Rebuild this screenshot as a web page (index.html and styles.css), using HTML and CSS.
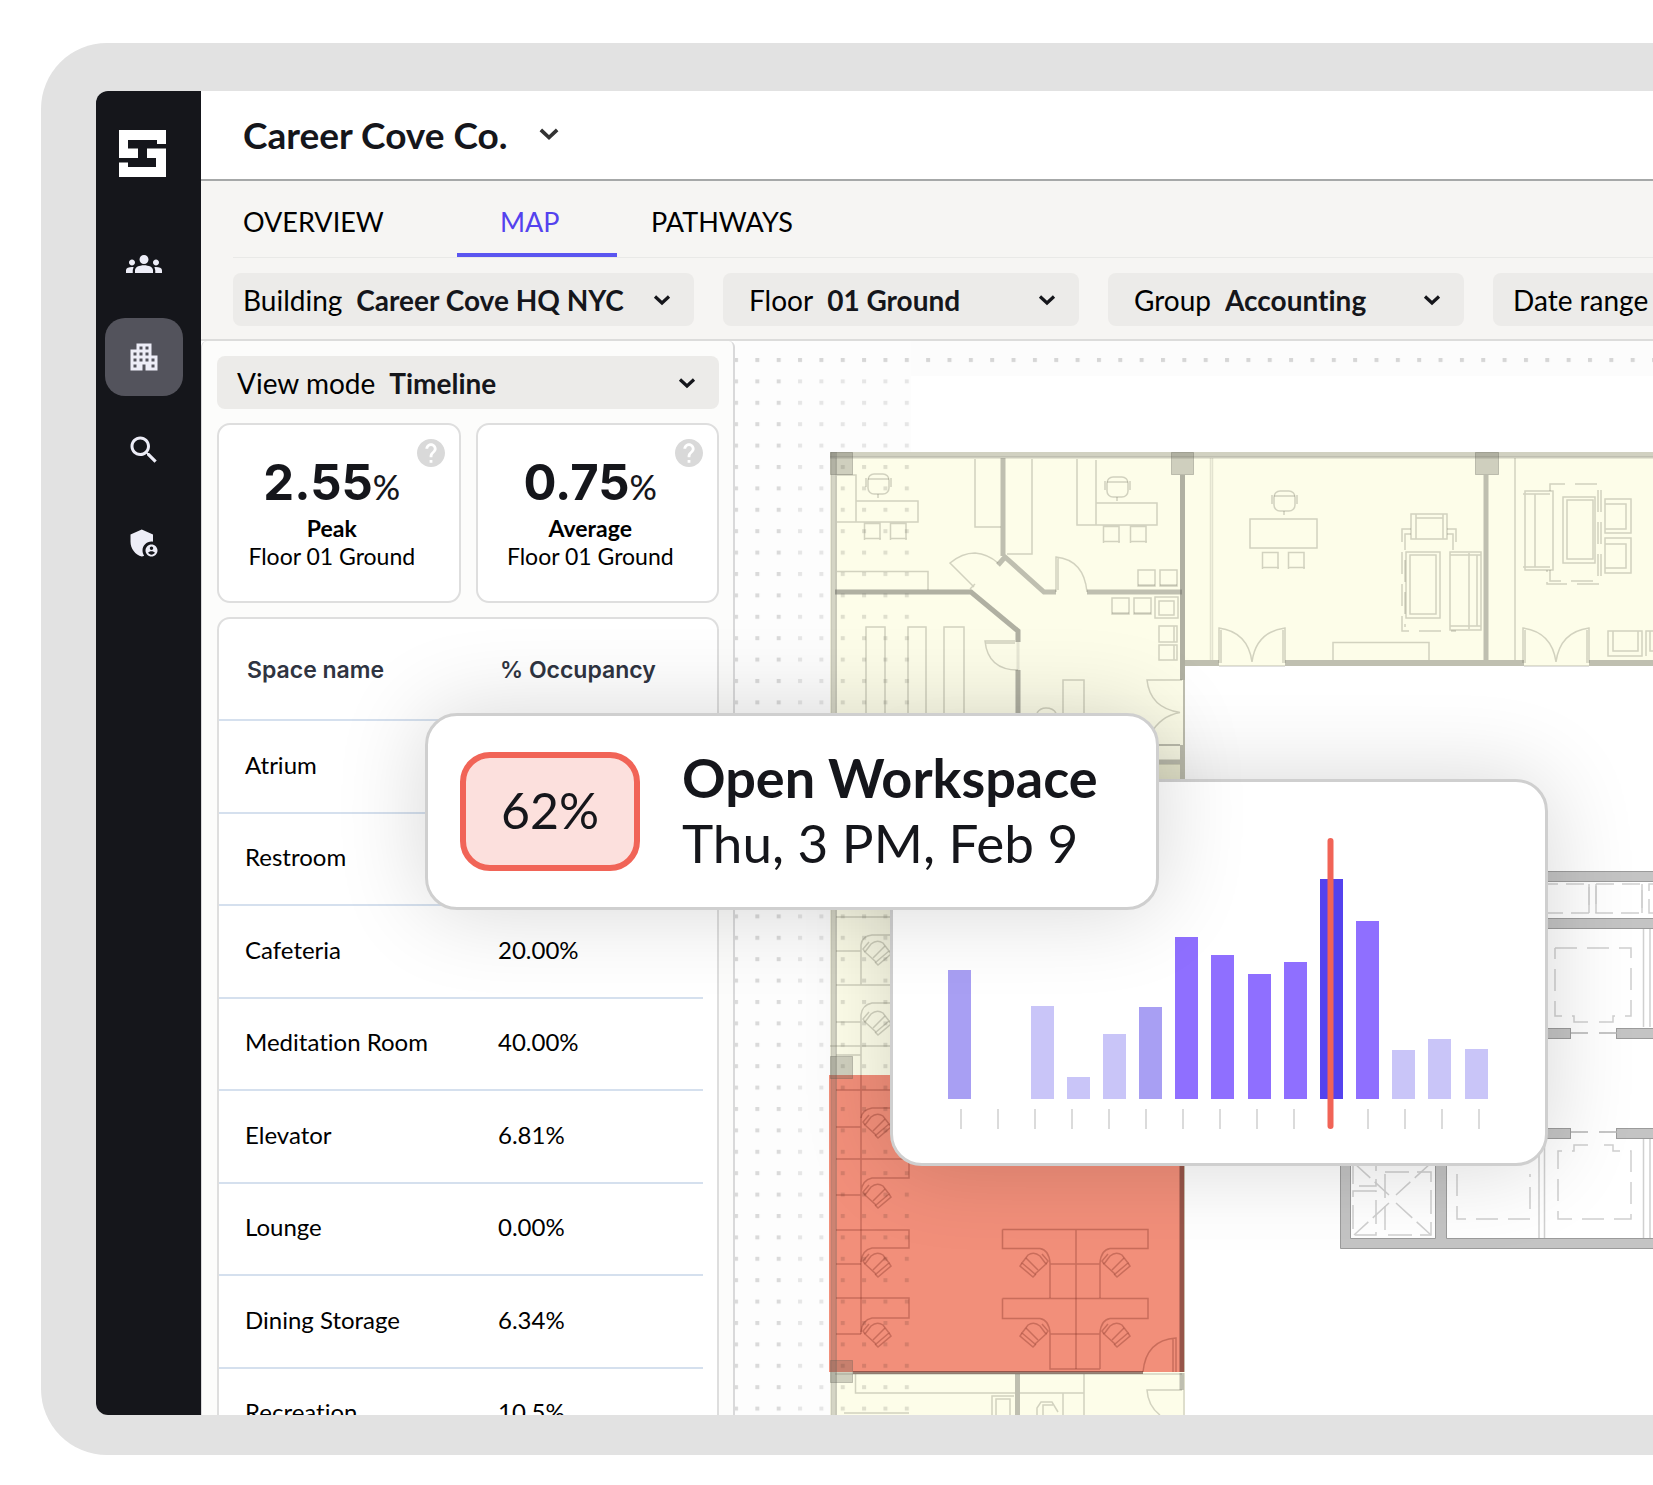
FILE: index.html
```html
<!DOCTYPE html>
<html lang="en">
<head>
    <meta charset="UTF-8">
    <meta name="viewport" content="width=device-width, initial-scale=1.0">
    <title>Career Cove Co. - Map</title>
    <link rel="stylesheet" href="styles.css">
</head>
<body>
<svg class="defs" width="0" height="0" aria-hidden="true">
    <symbol id="chevron" viewBox="0 0 18 12"><path d="M2 2.5L9 9L16 2.5" fill="none" stroke="currentColor" stroke-width="3.2"/></symbol>
    <symbol id="help" viewBox="0 0 24 24"><path d="M12 2C6.480 2 2 6.480 2 12s4.480 10 10 10 10-4.480 10-10S17.520 2 12 2zm1 17h-2v-2h2v2zm2.070-7.750l-.9.920C13.450 12.900 13 13.500 13 15h-2v-.5c0-1.100.450-2.100 1.170-2.830l1.240-1.260c.370-.360.590-.860.590-1.410 0-1.100-.9-2-2-2s-2 .9-2 2H8c0-2.210 1.790-4 4-4s4 1.790 4 4c0 .880-.360 1.680-.930 2.250z"/></symbol>
</svg>

<div class="device">
    <div class="screen">
        <nav class="sidebar" aria-label="Main">
            <a class="logo" href="#" aria-label="Home">
                <svg width="47" height="47" viewBox="0 0 47 47"><path fill="#fff" fill-rule="evenodd" d="M0 0H47V14H38V10H9V18.500H19V28H0ZM47 18.500V47H0V32.500H9V37H37V28H28V18.500Z"/></svg>
            </a>
            <a class="nav-item" href="#" aria-label="People">
                <svg viewBox="0 0 24 24"><path d="M12 12.750c1.630 0 3.070.390 4.240.9 1.080.480 1.760 1.560 1.760 2.730V18H6v-1.610c0-1.180.680-2.260 1.760-2.730 1.170-.520 2.610-.910 4.240-.910zM4 13c1.100 0 2-.9 2-2s-.9-2-2-2-2 .9-2 2 .9 2 2 2zm1.130 1.100c-.370-.060-.740-.1-1.130-.1-.990 0-1.930.210-2.780.580C.480 14.900 0 15.620 0 16.430V18h4.500v-1.610c0-.830.230-1.610.630-2.290zM20 13c1.100 0 2-.9 2-2s-.9-2-2-2-2 .9-2 2 .9 2 2 2zm4 3.430c0-.810-.480-1.530-1.220-1.850-.850-.370-1.790-.580-2.780-.580-.390 0-.760.040-1.130.1.400.680.630 1.460.630 2.290V18H24v-1.570zM12 6c1.660 0 3 1.340 3 3s-1.340 3-3 3-3-1.340-3-3 1.340-3 3-3z"/></svg>
            </a>
            <a class="nav-item active" href="#" aria-label="Buildings">
                <svg viewBox="0 0 24 24"><path d="M17 11V3H7v4H3v14h8v-4h2v4h8V11h-4zM7 19H5v-2h2v2zm0-4H5v-2h2v2zm0-4H5V9h2v2zm4 4H9v-2h2v2zm0-4H9V9h2v2zm0-4H9V5h2v2zm4 8h-2v-2h2v2zm0-4h-2V9h2v2zm0-4h-2V5h2v2zm4 12h-2v-2h2v2zm0-4h-2v-2h2v2z"/></svg>
            </a>
            <a class="nav-item" href="#" aria-label="Search">
                <svg viewBox="0 0 24 24"><path d="M15.500 14h-.790l-.280-.270C15.410 12.590 16 11.110 16 9.500 16 5.910 13.090 3 9.500 3S3 5.910 3 9.500 5.910 16 9.500 16c1.610 0 3.090-.590 4.230-1.570l.270.280v.790l5 4.990L20.490 19l-4.990-5zm-6 0C7.010 14 5 11.990 5 9.500S7.010 5 9.500 5 14 7.010 14 9.500 11.990 14 9.500 14z"/></svg>
            </a>
            <a class="nav-item" href="#" aria-label="Admin">
                <svg viewBox="0 0 24 24"><path d="M17 11c.340 0 .670.040 1 .090V6.270L10.500 3 3 6.270v4.910c0 4.540 3.200 8.790 7.500 9.820.550-.130 1.080-.320 1.600-.550-.690-.980-1.100-2.170-1.100-3.450 0-3.310 2.690-6 6-6z"/><path d="M17 13c-2.210 0-4 1.790-4 4s1.790 4 4 4 4-1.790 4-4-1.790-4-4-4zm0 1.380c.620 0 1.120.510 1.120 1.120s-.510 1.120-1.120 1.120-1.120-.510-1.120-1.120.5-1.120 1.120-1.120zm0 5.370c-.930 0-1.740-.460-2.240-1.170.050-.720 1.510-1.080 2.240-1.080s2.190.360 2.240 1.080c-.5.710-1.310 1.170-2.240 1.170z"/></svg>
            </a>
        </nav>

        <div class="main">
            <header class="topbar">
                <select class="company" aria-label="Company">
                    <option>Career Cove Co.</option>
                </select>
                <svg class="chevron large"><use href="#chevron"/></svg>
            </header>

            <div class="controls">
                <nav class="tabs" aria-label="Views">
                    <a class="tab" href="#">OVERVIEW</a>
                    <a class="tab active" href="#" aria-current="page">MAP</a>
                    <a class="tab" href="#">PATHWAYS</a>
                </nav>
                <div class="filters">
                    <div class="field compact">
                        <label for="building">Building</label>
                        <select id="building"><option>Career Cove HQ NYC</option></select>
                        <svg class="chevron"><use href="#chevron"/></svg>
                    </div>
                    <div class="field">
                        <label for="floor">Floor</label>
                        <select id="floor"><option>01 Ground</option></select>
                        <svg class="chevron"><use href="#chevron"/></svg>
                    </div>
                    <div class="field">
                        <label for="group">Group</label>
                        <select id="group"><option>Accounting</option></select>
                        <svg class="chevron"><use href="#chevron"/></svg>
                    </div>
                    <button class="field range" type="button">Date range</button>
                </div>
            </div>

            <div class="content">
                <aside class="panel">
                    <div class="field view-mode">
                        <label for="view-mode">View mode</label>
                        <select id="view-mode"><option>Timeline</option></select>
                        <svg class="chevron"><use href="#chevron"/></svg>
                    </div>

                    <div class="stats">
                        <div class="stat">
                            <button class="help" type="button" aria-label="About peak"><svg viewBox="2 2 20 20"><use href="#help" width="24" height="24"/></svg></button>
                            <div class="stat-value">2.55<span>%</span></div>
                            <div class="stat-name">Peak</div>
                            <div class="stat-place">Floor 01 Ground</div>
                        </div>
                        <div class="stat">
                            <button class="help" type="button" aria-label="About average"><svg viewBox="2 2 20 20"><use href="#help" width="24" height="24"/></svg></button>
                            <div class="stat-value">0.75<span>%</span></div>
                            <div class="stat-name">Average</div>
                            <div class="stat-place">Floor 01 Ground</div>
                        </div>
                    </div>

                    <div class="spaces">
                        <table>
                            <thead>
                                <tr><th>Space name</th><th>% Occupancy</th></tr>
                            </thead>
                            <tbody>
                                <tr><td>Atrium</td><td></td></tr>
                                <tr><td>Restroom</td><td></td></tr>
                                <tr><td>Cafeteria</td><td>20.00%</td></tr>
                                <tr><td>Meditation Room</td><td>40.00%</td></tr>
                                <tr><td>Elevator</td><td>6.81%</td></tr>
                                <tr><td>Lounge</td><td>0.00%</td></tr>
                                <tr><td>Dining Storage</td><td>6.34%</td></tr>
                                <tr><td>Recreation</td><td>10.5%</td></tr>
                            </tbody>
                        </table>
                    </div>
                </aside>

                <div class="map">
                    <svg class="plan" viewBox="735 341 918 1074" preserveAspectRatio="xMinYMin slice" role="img" aria-label="Floor plan">
                        <defs>
                            <pattern id="dots" x="734" y="358" width="21.350" height="21.400" patternUnits="userSpaceOnUse">
                                <rect width="4" height="4" fill="#000"/>
                            </pattern>
                            <g id="desk-chair">
                                <rect x="-10" y="-10" width="21" height="20" rx="6"/>
                                <path d="M-10 -5H11M-12 -6V3M13 -6V3M0 10V14"/>
                            </g>
                            <g id="stool"><path d="M.5 17V.5H16V17M0 15.500H17" /></g>
                            <g id="seat"><rect width="17" height="16"/><path d="M0 15H17"/></g>
                            <g id="task-chair">
                                <path d="M-12 1L-6 -7Q0 -12 6 -8L12 0L-1 11Z"/>
                                <path d="M-4 7L8 -5M12 0L14 3L1 14L-2 11M-12 1L-14 -2L-8 -9"/>
                            </g>
                            <g id="double-door"><path d="M0 35V0Q29 4 33 34Q37 4 66 0V35M2 35V2M64 35V2"/></g>
                        </defs>

                        <rect x="735" y="341" width="918" height="35" fill="#fcfcfc"/>
                        <rect x="735" y="341" width="176" height="1074" fill="#fdfdfd"/>

                        <!-- rooms -->
                        <path d="M830 452H1653V666H1185V1415H830Z" fill="#fdfde9"/>
                        <rect x="829" y="1075" width="355" height="297" fill="#f28f7a"/>

                        <!-- dot grid -->
                        <g fill="url(#dots)">
                            <rect x="734" y="358" width="919" height="10" opacity=".15"/>
                            <rect x="734" y="368" width="60" height="1047" opacity=".14"/>
                            <rect x="794" y="368" width="117" height="84" opacity=".09"/>
                            <rect x="794" y="452" width="36" height="963" opacity=".09"/>
                            <rect x="830" y="452" width="81" height="963" opacity=".12"/>
                        </g>

                        <!-- outer walls -->
                        <g fill="none" stroke="#60605a">
                            <path d="M830 454.500H1653" stroke-width="5" stroke-opacity=".28"/>
                            <path d="M830 457.500H1653" stroke-width="2" stroke-opacity=".3"/>
                            <path d="M834 452V1415" stroke-width="6" stroke-opacity=".25"/>
                            <path d="M831 452V1415M836 458V1415" stroke-opacity=".2"/>
                        </g>
                        <g fill="#5a5a50" fill-opacity=".28" stroke="#5a5a50" stroke-opacity=".3">
                            <rect x="830.500" y="452.500" width="22" height="22"/>
                            <rect x="1171.500" y="452.500" width="22" height="22"/>
                            <rect x="1475.500" y="452.500" width="23" height="22"/>
                            <rect x="830.500" y="1056.500" width="22" height="22"/>
                            <rect x="830.500" y="1360.500" width="22" height="22"/>
                        </g>

                        <!-- inner walls -->
                        <g fill="none" stroke="#6a6a62" stroke-opacity=".42" stroke-width="5">
                            <path d="M1003 458V556M998 565L1005 557L1044 592H1056M1087 592H1182"/>
                            <path d="M835 592H971L1018 631V642M1018 670V720" stroke-opacity=".52"/>
                            <path d="M1018 642V670" stroke-width="3" stroke-opacity=".15"/>
                            <path d="M1182.500 475V680" stroke-opacity=".52"/>
                            <path d="M1182.500 745V780M1157 762H1180"/>
                            <path d="M1157 745H1180M1184 680V745" stroke-width="2"/>
                            <path d="M1185 663H1219M1285 663H1524M1589 663H1653" stroke-width="6"/>
                            <path d="M1219 666H1285M1524 666H1589" stroke-width="1"/>
                            <path d="M1486 475V660"/>
                            <path d="M1182 1160V1372" stroke="#5a2e28" stroke-opacity=".6"/>
                            <path d="M853 1372.500H1143" stroke="#5a2e28" stroke-opacity=".6" stroke-width="3"/>
                            <path d="M1182 1373V1390" />
                            <path d="M1017.500 1374V1415"/>
                            <path d="M1184 1390V1415M835 1374H1182" stroke-width="1"/>
                        </g>
                        <rect x="1157" y="764" width="23" height="16" fill="#8a8a50" fill-opacity=".15"/>

                        <!-- furniture and doors -->
                        <g fill="none" stroke="#6f6f60" stroke-opacity=".3" stroke-width="1.500">
                            <path d="M837 475H856V522H837M856 501H918V522H856"/>
                            <use href="#desk-chair" x="878" y="484"/>
                            <use href="#stool" x="864" y="523"/>
                            <use href="#stool" x="890" y="523"/>
                            <path d="M975 459V527H1001M1007 554H1032V459M837 571.500H928V590"/>
                            <path d="M974 587L950 563Q962 553 975 553Q988 554 998 563M970 589L975 584"/>
                            <path d="M1077 459V525H1096V460M1096 503H1157V525H1096"/>
                            <use href="#desk-chair" x="1117" y="487"/>
                            <use href="#stool" x="1103" y="526"/>
                            <use href="#stool" x="1130" y="526"/>
                            <path d="M1056 592V557Q1084 560 1087 592M1058 590V558"/>
                            <use href="#seat" x="1138" y="570"/>
                            <use href="#seat" x="1160" y="570"/>
                            <use href="#seat" x="1112" y="598"/>
                            <use href="#seat" x="1134" y="598"/>
                            <rect x="1155" y="597" width="23" height="21"/>
                            <rect x="1159" y="601" width="15" height="14"/>
                            <path d="M1159 626H1177V642H1159ZM1174 626V642M1159 645H1177V660H1159ZM1174 645V660"/>
                            <path d="M866 720V627H885V720M908 720V627H926V720M944 720V627H964V720"/>
                            <path d="M1015 641H985Q988 670 1018 670M985 643H1015"/>
                            <path d="M1063 720V680H1084V720M1037 713Q1040 708 1046 708Q1053 708 1056 713"/>
                            <path d="M1182 680H1147Q1150 708 1180 712.500Q1160 716 1150 735"/>

                            <path d="M1210.500 458V660M1212.500 458V660" stroke-opacity=".18"/>
                            <use href="#desk-chair" x="1284" y="501"/>
                            <rect x="1250" y="519" width="67" height="29"/>
                            <use href="#stool" x="1262" y="552"/>
                            <use href="#stool" x="1288" y="552"/>
                            <use href="#double-door" x="1219" y="628"/>
                            <path d="M1333 660V642.500H1429V660"/>
                            <path d="M1411 514H1447V539H1411ZM1416 514V539M1443 514V539M1416 518H1443"/>
                            <path d="M1411 529H1402V631H1456M1411 534H1405V627M1447 529H1456V550M1447 534H1453V550" stroke-dasharray="22 10"/>
                            <rect x="1406" y="552" width="34" height="66"/>
                            <rect x="1410" y="555" width="26" height="59"/>
                            <path d="M1450 552H1481V630H1450ZM1469 553V629M1450 555H1481M1450 626H1481M1477 555V626"/>

                            <path d="M1515 458V660"/>
                            <path d="M1525 491H1553V570H1525ZM1535 494V567M1523 494H1550M1523 567H1550"/>
                            <path d="M1550 491V484H1601V584H1547V570M1550 570V581H1598V487" stroke-dasharray="22 10"/>
                            <rect x="1563" y="497" width="32" height="66"/>
                            <rect x="1567" y="500" width="26" height="59"/>
                            <path d="M1605 499H1631V533H1605ZM1605 504H1626V529H1605M1626 504V529"/>
                            <path d="M1605 538H1631V573H1605ZM1605 544H1626V568H1605"/>
                            <use href="#double-door" x="1523" y="628"/>
                            <path d="M1608 631H1642V656H1608ZM1613 631V651H1638V631M1646 656V631H1653M1650 631V651H1653"/>

                            <!-- yellow strip desks -->
                            <path d="M836 917H890M836 951H861M861 985V945Q862 936 872 935H890M836 985H890M836 1022H861M861 1075V1015Q862 1005 872 1003H890M830 1046H890M836 1055H861"/>
                            <use href="#task-chair" x="877" y="951"/>
                            <use href="#task-chair" x="877" y="1021"/>

                            <!-- bottom rooms -->
                            <path d="M855.500 1374V1393H1015M1020 1393H1084M1084 1374V1415M1063 1393V1415M844 1413H909"/>
                            <path d="M992 1415V1396H1014M996 1415V1399H1010V1415M1037 1415V1408L1041 1402H1052L1058 1412M1043 1415V1405H1053"/>
                            <path d="M1182 1390H1147Q1148 1406 1160 1415"/>
                        </g>

                        <!-- highlighted workspace desks -->
                        <g fill="none" stroke="#7a2c20" stroke-opacity=".34" stroke-width="1.500">
                            <path d="M836 1090H890M861 1075V1334M836 1127H861M836 1159H909V1178H872Q862 1180 861 1192M836 1195H861"/>
                            <path d="M836 1230H909V1248H872Q862 1250 861 1262M836 1264H861M836 1298H909V1318H872Q862 1320 861 1332M836 1334H861M861 1118Q862 1110 872 1108H890"/>
                            <use href="#task-chair" x="877" y="1124"/>
                            <use href="#task-chair" x="877" y="1194"/>
                            <use href="#task-chair" x="877" y="1263"/>
                            <use href="#task-chair" x="877" y="1333"/>
                            <path d="M1002.500 1229.500H1148V1248.500H1110Q1101 1250 1100 1263V1298M1002.500 1229.500V1248.500H1040Q1049 1250 1050 1263V1298M1050 1264H1100M1076 1230V1369"/>
                            <path d="M1002.500 1298.500H1148V1318.500H1110Q1101 1320 1100 1333V1369M1002.500 1298.500V1318.500H1040Q1049 1320 1050 1333V1369H1100M1050 1334H1100"/>
                            <use href="#task-chair" x="1116" y="1263"/>
                            <use href="#task-chair" x="1116" y="1333"/>
                            <use href="#task-chair" transform="translate(1034 1263) scale(-1 1)"/>
                            <use href="#task-chair" transform="translate(1034 1333) scale(-1 1)"/>
                            <path d="M1143 1372Q1146 1340 1176 1338V1372M1173 1339V1372"/>
                        </g>

                        <!-- service core -->
                        <g fill="#c4c4c4" stroke="#9b9b9b">
                            <rect x="1500.500" y="871.500" width="160" height="10"/>
                            <rect x="1500.500" y="918.500" width="160" height="10"/>
                            <rect x="1500.500" y="1028.500" width="70" height="10"/>
                            <rect x="1616.500" y="1028.500" width="50" height="10"/>
                            <rect x="1500.500" y="1128.500" width="70" height="10"/>
                            <rect x="1616.500" y="1128.500" width="50" height="10"/>
                            <path d="M1340.500 1100V1248.500H1660V1238.500H1446.500V1100H1435.500V1238.500H1350.500V1100Z"/>
                        </g>
                        <g fill="none" stroke="#d0d0d0" stroke-width="1.500">
                            <path d="M1540 884H1589V913H1540M1596 884H1642V913H1596ZM1660 884H1649V913H1660" stroke-dasharray="18 8"/>
                            <path d="M1589 884V913M1596 884V913M1642 884V913"/>
                            <path d="M1643.500 929V1027M1650 929V1027M1643.500 1139V1238M1650 1139V1238M1539 1120V1238M1544.500 1120V1238"/>
                            <path d="M1555 948H1631V1016H1613V1022H1599M1588 1022H1574V1016H1555V948" stroke-dasharray="22 10"/>
                            <path d="M1571 1033H1588M1599 1033H1617M1571 1132H1588M1599 1132H1617" stroke="#b4b4b4"/>
                            <path d="M1588 1145H1574V1151H1558V1219H1631V1151H1613V1145H1599" stroke-dasharray="22 10"/>
                            <path d="M1457 1174V1219H1530V1174" stroke-dasharray="22 10"/>
                            <path d="M1353 1160V1186H1376V1160M1353 1191H1376V1235H1353ZM1385 1172H1431V1235H1385Z" stroke-dasharray="24 8"/>
                            <path d="M1354 1163L1389 1195M1396 1203L1431 1235M1431 1163L1396 1195M1389 1203L1354 1235" stroke-dasharray="22 6"/>
                        </g>
                    </svg>
                </div>
            </div>
        </div>
    </div>
</div>

<!-- hourly occupancy chart -->
<div class="float chart-card">
    <svg class="chart" viewBox="893 781 652 381" role="img" aria-label="Occupancy by hour">
        <g fill="#c9c5f8">
            <rect x="1031" y="1005" width="23" height="93"/>
            <rect x="1067" y="1076" width="23" height="22"/>
            <rect x="1103" y="1033" width="23" height="65"/>
            <rect x="1392" y="1049" width="23" height="49"/>
            <rect x="1428" y="1038" width="23" height="60"/>
            <rect x="1465" y="1048" width="23" height="50"/>
        </g>
        <g fill="#a89ff3">
            <rect x="948" y="969" width="23" height="129"/>
            <rect x="1139" y="1006" width="23" height="92"/>
        </g>
        <g fill="#8f6fff">
            <rect x="1175" y="936" width="23" height="162"/>
            <rect x="1211" y="954" width="23" height="144"/>
            <rect x="1248" y="973" width="23" height="125"/>
            <rect x="1284" y="961" width="23" height="137"/>
            <rect x="1356" y="920" width="23" height="178"/>
        </g>
        <rect x="1320" y="878" width="23" height="220" fill="#5442ee"/>
        <path d="M961 1108V1128M998 1108V1128M1035 1108V1128M1072 1108V1128M1109 1108V1128M1146 1108V1128M1183 1108V1128M1220 1108V1128M1257 1108V1128M1294 1108V1128M1368 1108V1128M1405 1108V1128M1442 1108V1128M1479 1108V1128" stroke="#cfcfcf" stroke-width="1.500"/>
        <path d="M1330.500 840V1125" stroke="#f16457" stroke-width="6" stroke-linecap="round"/>
    </svg>
</div>

<div class="float tooltip">
    <div class="badge">62%</div>
    <div class="tooltip-text">
        <div class="tooltip-title">Open Workspace</div>
        <div class="tooltip-time">Thu, 3 PM, Feb 9</div>
    </div>
</div>
</body>
</html>
```
FILE: styles.css
```css
* {
    box-sizing: border-box;
}
body {
    margin: 0;
    padding: 43px 0 30px 41px;
    height: 100vh;
    position: relative;
    overflow: hidden;
    background-color: #fff;
    color: #000;
    font-family: Lato, 'Open Sans', sans-serif;
    font-size: 27px;
    font-variant-ligatures: none;
}
.defs {
    position: absolute;
}
a {
    color: inherit;
    text-decoration: none;
}
button, select {
    font: inherit;
    font-variant-ligatures: none;
    color: inherit;
    border: none;
    background: none;
    padding: 0;
    margin: 0;
    cursor: pointer;
}
select {
    appearance: none;
    font-weight: 700;
    color: #15161b;
}

/* device frame */
.device {
    height: 100%;
    padding: 48px 0 40px 55px;
    background-color: #e2e2e2;
    border-radius: 66px 0 0 66px;
}
.screen {
    display: flex;
    height: 100%;
    overflow: hidden;
    background-color: #fff;
    border-radius: 12px 0 0 12px;
}

/* sidebar */
.sidebar {
    flex: none;
    width: 105px;
    padding: 39px 9px;
    background-color: #15161b;
    display: flex;
    flex-direction: column;
    gap: 15px;
}
.logo {
    display: block;
    height: 80px;
    padding-left: 14px;
}
.nav-item {
    display: flex;
    align-items: center;
    justify-content: center;
    width: 78px;
    height: 78px;
    border-radius: 20px;
}
.nav-item.active {
    background-color: #53535c;
}
.nav-item svg {
    width: 36px;
    height: 36px;
    fill: #ededf7;
}

/* header */
.main {
    flex: 1;
    min-width: 0;
    display: flex;
    flex-direction: column;
}
.topbar {
    display: flex;
    align-items: center;
    gap: 29px;
    height: 90px;
    padding: 0 0 2px 42px;
    border-bottom: 2px solid #a6a8a8;
}
.company {
    font-size: 37px;
}
.chevron {
    flex: none;
    width: 18px;
    height: 12px;
    color: #15161b;
    pointer-events: none;
}
.chevron.large {
    width: 22px;
    height: 14px;
    color: #333;
}
.controls {
    padding-left: 32px;
    background-color: #f6f5f3;
    border-bottom: 2px solid #dcdcdb;
}
.tabs {
    display: flex;
    gap: 34px;
    height: 77px;
    padding-left: 10px;
    border-bottom: 1px solid #e9e9e7;
}
.tab {
    padding-top: 24px;
    line-height: 34px;
}
.tab:first-child {
    min-width: 180px;
}
.tab.active {
    min-width: 160px;
    padding-left: 43px;
    color: #5442ee;
    border-bottom: 4px solid #5a55f0;
}
.filters {
    display: grid;
    grid-template-columns: 461px 356px 356px 1fr;
    gap: 29px;
    padding: 15px 0 13px;
}
.field {
    display: flex;
    align-items: center;
    gap: 14px;
    height: 53px;
    padding: 0 23px 0 26px;
    font-size: 28px;
    background-color: #ecebe9;
    border-radius: 8px;
}
.field select {
    flex: 1;
    min-width: 0;
}
.field.compact {
    padding-left: 10px;
}
.field.range {
    padding: 0 0 0 20px;
    font-size: 28px;
    background-color: #ecebe9;
    border-radius: 8px 0 0 8px;
    white-space: nowrap;
}

/* left panel */
.content {
    flex: 1;
    min-height: 0;
    display: flex;
}
.panel {
    flex: none;
    width: 534px;
    padding: 15px 14px 0 15px;
    display: flex;
    flex-direction: column;
    gap: 14px;
    background-color: #fcfcfb;
    border: 2px solid #d9d9da;
    border-width: 0 2px 0 1px;
    border-radius: 6px 6px 0 0;
    overflow: hidden;
}
.field.view-mode {
    flex: none;
    padding-left: 20px;
}
.stats {
    flex: none;
    display: grid;
    grid-template-columns: 1fr 1fr;
    gap: 15px;
}
.stat {
    position: relative;
    height: 180px;
    padding: 30px 14px 0 0;
    background-color: #fff;
    border: 2px solid #dedede;
    border-radius: 13px;
    text-align: center;
    font-size: 23px;
    line-height: 28px;
}
.stat-value {
    font-family: Inter, sans-serif;
    font-size: 49px;
    font-weight: 700;
    line-height: 55px;
    color: #15161b;
}
.stat-value span {
    font-family: Lato, sans-serif;
    font-size: 34px;
    font-weight: 500;
}
.stat-name {
    font-weight: 700;
}
.help {
    position: absolute;
    top: 14px;
    right: 14px;
    width: 28px;
    height: 28px;
}
.help svg {
    display: block;
    width: 28px;
    height: 28px;
    fill: #d9d9d9;
}
.spaces {
    flex: 1;
    min-height: 0;
    padding-right: 14px;
    overflow: hidden;
    background-color: #fff;
    border: 2px solid #dedede;
    border-bottom: none;
    border-radius: 13px 13px 0 0;
}
.spaces table {
    width: 100%;
    height: 842px;
    border-collapse: collapse;
    table-layout: fixed;
    text-align: left;
}
.spaces th {
    height: 101px;
    padding: 2px 0 0 28px;
    font-family: Inter, sans-serif;
    font-size: 23px;
    font-weight: 600;
    color: #2f3441;
}
.spaces td {
    padding: 0 0 4px 26px;
    font-size: 24px;
}
.spaces th:first-child {
    width: 253px;
}
.spaces tr {
    border-bottom: 2px solid #d5e0ee;
}

/* map */
.map {
    flex: 1;
    min-width: 0;
    background-color: #fff;
}
.plan {
    display: block;
    width: 100%;
    height: 100%;
}

/* floating cards over the map */
.float {
    position: absolute;
    background-color: #fff;
    border: 3px solid #cfcfcf;
    border-radius: 32px;
    box-shadow: 0 0 90px rgba(0, 0, 0, 0.16);
}
.chart-card {
    left: 890px;
    top: 779px;
    width: 658px;
}
.chart {
    display: block;
    width: 100%;
}
.tooltip {
    left: 425px;
    top: 713px;
    display: flex;
    align-items: center;
    gap: 42px;
    width: 734px;
    padding: 29px 32px;
    color: #15161b;
    white-space: nowrap;
}
.badge {
    flex: none;
    display: flex;
    align-items: center;
    justify-content: center;
    width: 180px;
    height: 119px;
    padding-bottom: 3px;
    border: 6px solid #f16457;
    border-radius: 30px;
    background-color: #fce0dd;
    font-size: 50px;
}
.tooltip-text {
    padding-bottom: 3px;
    font-size: 53px;
    line-height: 65px;
}
.tooltip-title {
    font-size: 54px;
    font-weight: 700;
}
```
